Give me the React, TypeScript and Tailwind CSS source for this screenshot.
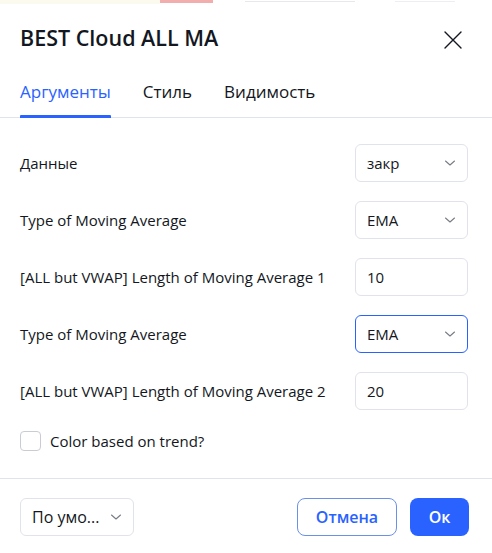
import React from "react";

const Chevron = ({ className = "" }: { className?: string }) => (
  <svg width="12" height="8" viewBox="0 0 12 8" className={className} fill="none">
    <path d="M1.5 2 L6 6 L10.5 2" stroke="#787b86" strokeWidth="1.1" strokeLinecap="round" strokeLinejoin="round" />
  </svg>
);

const Select = ({ value, focused = false }: { value: string; focused?: boolean }) => (
  <div
    className={`w-[113px] h-[38px] rounded-[6px] border flex items-center justify-between pl-[11px] pr-[11px] ${
      focused ? "border-[#2962ff]" : "border-[#e0e3eb]"
    }`}
  >
    <span className="text-[15px] text-[#131722]">{value}</span>
    <Chevron />
  </div>
);

const Input = ({ value }: { value: string }) => (
  <div className="w-[113px] h-[38px] rounded-[6px] border border-[#e0e3eb] flex items-center pl-[11px]">
    <span className="text-[15px] text-[#131722]">{value}</span>
  </div>
);

const Row = ({ label, children }: { label: string; children: React.ReactNode }) => (
  <div className="flex items-center justify-between h-[38px]">
    <span className="text-[15px] text-[#131722]">{label}</span>
    {children}
  </div>
);

export default function App() {
  return (
    <div
      className="w-[492px] h-[553px] bg-white overflow-hidden flex flex-col"
      style={{ fontFamily: '"Open Sans", "Noto Sans", sans-serif' }}
    >
      {/* background chart strip */}
      <div className="h-[6px] flex items-start bg-white">
        <div className="w-[160px] h-[4px] bg-[#fcf9ef]" />
        <div className="w-[53px] h-[3px] bg-[#ec8a8a] opacity-70" />
        <div className="w-[32px]" />
        <div className="w-[110px] h-[1px] mt-[1px] bg-[#e6e8ec]" />
        <div className="w-[40px]" />
        <div className="w-[60px] h-[1px] mt-[1px] bg-[#eceef1]" />
      </div>

      {/* header */}
      <div className="h-[64px] flex items-center justify-between pl-5 pr-[28px]">
        <span className="text-[21.5px] font-semibold text-[#131722] leading-none">BEST Cloud ALL MA</span>
        <svg width="22" height="22" viewBox="0 0 22 22" fill="none" className="mt-[4px]">
          <path d="M3 3 L19 19 M19 3 L3 19" stroke="#131722" strokeWidth="1.4" strokeLinecap="round" />
        </svg>
      </div>

      {/* tabs */}
      <div className="h-[48px] border-b border-[#e0e3eb] flex gap-8 px-5">
        <div className="relative pt-[10px]">
          <span className="text-[17px] font-medium text-[#2962ff] leading-[18px]">Аргументы</span>
          <div className="absolute left-0 right-0 bottom-[-1px] h-[3px] bg-[#2962ff] rounded-t-[1px]" />
        </div>
        <div className="pt-[10px]">
          <span className="text-[17px] font-medium text-[#131722] leading-[18px]">Стиль</span>
        </div>
        <div className="pt-[10px]">
          <span className="text-[17px] font-medium text-[#131722] leading-[18px]">Видимость</span>
        </div>
      </div>

      {/* content */}
      <div className="flex flex-col gap-[19px] pt-[26px] pl-5 pr-[24px]">
        <Row label="Данные">
          <Select value="закр" />
        </Row>
        <Row label="Type of Moving Average">
          <Select value="EMA" />
        </Row>
        <Row label="[ALL but VWAP] Length of Moving Average 1">
          <Input value="10" />
        </Row>
        <Row label="Type of Moving Average">
          <Select value="EMA" focused />
        </Row>
        <Row label="[ALL but VWAP] Length of Moving Average 2">
          <Input value="20" />
        </Row>
      </div>

      <div className="flex items-center gap-[9px] pl-5 mt-[21px] h-[20px]">
        <div className="w-[21px] h-[20px] rounded-[4px] border border-[#c9ccd4]" />
        <span className="text-[15px] text-[#131722]">Color based on trend?</span>
      </div>

      <div className="mt-[27px] border-t border-[#e0e3eb]" />

      {/* footer */}
      <div className="flex items-center justify-between pl-5 pr-[23px] pt-[19px]">
        <div className="w-[114px] h-[38px] rounded-[6px] border border-[#e0e3eb] flex items-center justify-between pl-[11px] pr-[11px]">
          <span className="text-[16px] text-[#131722]">По умо...</span>
          <Chevron />
        </div>
        <div className="flex gap-[13px]">
          <div className="w-[100px] h-[38px] rounded-[8px] border border-[#6c8fe8] flex items-center justify-center">
            <span className="text-[16px] font-semibold text-[#2962ff]">Отмена</span>
          </div>
          <div className="w-[59px] h-[38px] rounded-[8px] bg-[#2962ff] flex items-center justify-center">
            <span className="text-[16px] font-semibold text-white">Ок</span>
          </div>
        </div>
      </div>
    </div>
  );
}
